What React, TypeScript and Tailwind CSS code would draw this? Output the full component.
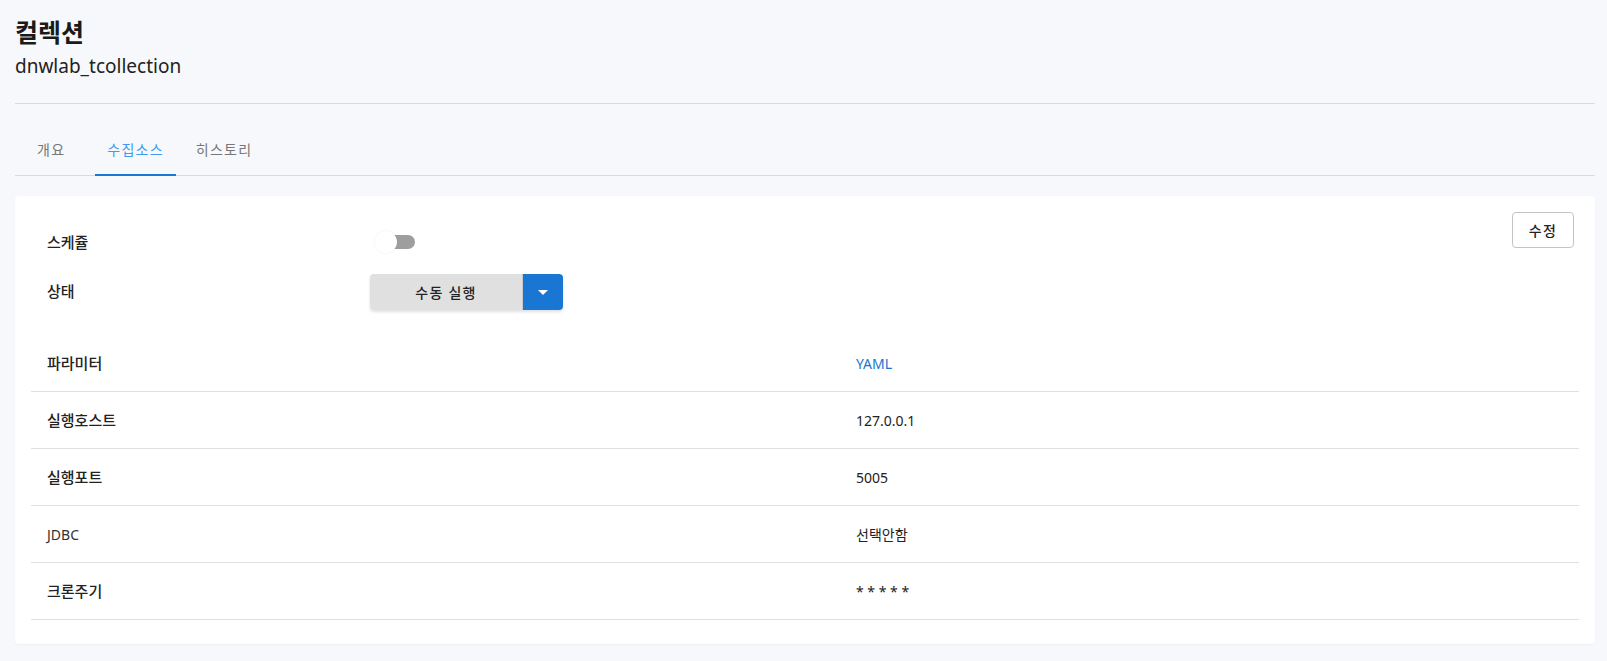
import { useState } from "react";

type Row = {
  label: string;
  value: string;
  link?: boolean;
  plain?: boolean;
};

const rows: Row[] = [
  { label: "파라미터", value: "YAML", link: true },
  { label: "실행호스트", value: "127.0.0.1" },
  { label: "실행포트", value: "5005" },
  { label: "JDBC", value: "선택안함", plain: true },
  { label: "크론주기", value: "* * * * *" },
];

const tabs = ["개요", "수집소스", "히스토리"];

function Toggle() {
  return (
    <div className="relative ml-[5px] w-[40px] h-[22px]">
      <div className="absolute left-[4px] top-[4px] w-[36px] h-[14px] rounded-full bg-[#9e9e9e]" />
      <div className="absolute left-0 top-0 w-[22px] h-[22px] rounded-full bg-white shadow-[0_0_3px_rgba(0,0,0,0.07)]" />
    </div>
  );
}

export default function App() {
  const [active] = useState(1);

  return (
    <div className="min-h-screen bg-[#f6f8fb] pl-[15px] pr-[12px] font-['Noto_Sans','Noto_Sans_CJK_KR',sans-serif] text-[#222]">
      <h1 className="pt-[16px] text-[25px] leading-8 font-bold text-[#1a1a1a]">컬렉션</h1>
      <p className="mt-[4px] text-[19px] leading-7 text-[#222]">dnwlab_tcollection</p>
      <div className="mt-[23px] border-b border-[#d9dadf]" />

      <div className="mt-[24px] flex border-b border-[#d9dadf] pl-[10px]">
        {tabs.map((t, i) => (
          <div
            key={t}
            className={
              "h-[48px] flex items-center pb-1 px-3 text-[14px] tracking-[0.09em] border-b-2 -mb-px " +
              (i === 1 ? "ml-[18px] " : i === 2 ? "ml-[8px] " : "") +
              (i === active ? "border-[#1976d2] text-[#3d9cf0]" : "border-transparent text-[#777]")
            }
          >
            {t}
          </div>
        ))}
      </div>

      <div className="mt-[20px] bg-white rounded-[4px] shadow-[0_1px_2px_rgba(0,0,0,0.04)] px-4 pt-4 pb-[24px]">
        <div className="flex justify-between">
          <div className="pt-[12px]">
            <div className="flex h-[36px] items-center">
              <div className="w-[339px] pl-4 text-[15px] font-medium">스케쥴</div>
              <Toggle />
            </div>
            <div className="mt-[14px] flex h-[36px] items-center">
              <div className="w-[339px] pl-4 pb-[2px] text-[15px] font-medium">상태</div>
              <div className="flex rounded-[4px] shadow-[0_2px_3px_rgba(0,0,0,0.12)]">
                <button className="w-[153px] h-[36px] bg-[#e0e0e0] rounded-l-[4px] text-[14px] tracking-[0.09em] font-medium text-[#222] border-r border-[#c8c8c8]">
                  수동 실행
                </button>
                <button className="w-[40px] h-[36px] bg-[#1976d2] rounded-r-[4px] flex items-center justify-center">
                  <svg width="10" height="5" viewBox="0 0 10 5">
                    <path d="M0 0h10L5 5z" fill="#fff" />
                  </svg>
                </button>
              </div>
            </div>
          </div>
          <button className="mr-[5px] w-[62px] h-[36px] border border-[#c4c4c4] rounded-[4px] text-[14px] tracking-[0.09em] font-medium text-[#222] bg-white">
            수정
          </button>
        </div>

        <div className="mt-[25px]">
          {rows.map((r) => (
            <div key={r.label} className="grid grid-cols-[825px_1fr] h-[57px] items-center border-b border-[#e0e0e0] text-[14px]">
              <div className={"pl-4 " + (r.plain ? "text-[#333]" : "text-[15px] font-medium")}>{r.label}</div>
              <div className={r.link ? "text-[#1976d2]" : "text-[#222]"}>{r.value}</div>
            </div>
          ))}
        </div>
      </div>
    </div>
  );
}
